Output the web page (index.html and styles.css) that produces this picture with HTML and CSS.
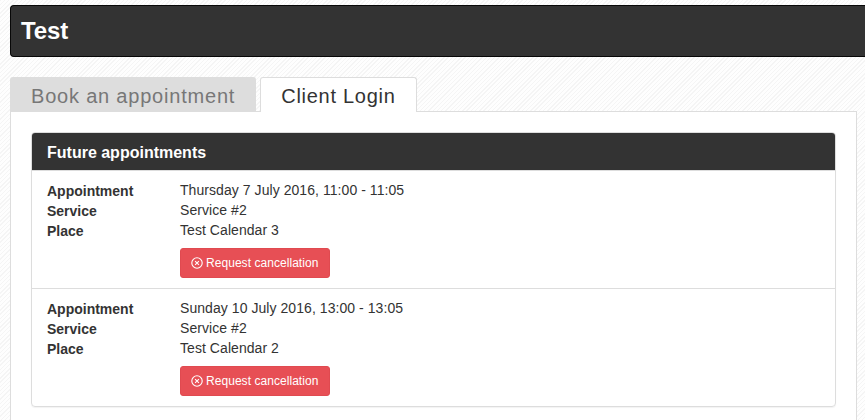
FILE: index.html
```html
<!DOCTYPE html>
<html lang="en">
<head>
    <meta charset="UTF-8">
    <meta name="viewport" content="width=device-width, initial-scale=1.0">
    <title>Test</title>
    <link rel="stylesheet" href="styles.css">
</head>
<body>
    <div class="navbar">
        <div class="brand">Test</div>
    </div>

    <div class="tabs">
        <div class="tab">Book an appointment</div>
        <div class="tab active">Client Login</div>
    </div>

    <div class="tab-content">
        <div class="panel">
            <div class="panel-heading">Future appointments</div>

            <div class="appointment">
                <dl class="details">
                    <dt>Appointment</dt>
                    <dd>Thursday 7 July 2016, 11:00 - 11:05</dd>
                    <dt>Service</dt>
                    <dd>Service #2</dd>
                    <dt>Place</dt>
                    <dd>Test Calendar 3</dd>
                </dl>
                <button class="btn-cancel">
                    <svg class="icon" viewBox="0 0 12 12"><circle cx="6" cy="6" r="5.2"/><path d="M4.1 4.1l3.8 3.8M7.9 4.1l-3.8 3.8"/></svg>
                    Request cancellation
                </button>
            </div>

            <div class="appointment">
                <dl class="details">
                    <dt>Appointment</dt>
                    <dd>Sunday 10 July 2016, 13:00 - 13:05</dd>
                    <dt>Service</dt>
                    <dd>Service #2</dd>
                    <dt>Place</dt>
                    <dd>Test Calendar 2</dd>
                </dl>
                <button class="btn-cancel">
                    <svg class="icon" viewBox="0 0 12 12"><circle cx="6" cy="6" r="5.2"/><path d="M4.1 4.1l3.8 3.8M7.9 4.1l-3.8 3.8"/></svg>
                    Request cancellation
                </button>
            </div>
        </div>
    </div>
</body>
</html>
```

FILE: styles.css
```css
html, body {
    height: 420px;
    overflow: hidden;
}
body {
    margin: 0;
    padding: 5px 0 0 10px;
    box-sizing: border-box;
    font-family: "Liberation Sans", Arial, sans-serif;
    font-size: 14px;
    line-height: 20px;
    color: #333;
    background: repeating-linear-gradient(135deg, #f5f5f5 0, #f5f5f5 1px, #fefefe 1px, #fefefe 3px);
}
.navbar {
    height: 50px;
    background: #333;
    border: 1px solid #080808;
    border-right: none;
    border-radius: 4px 0 0 4px;
    padding-left: 10px;
    display: flex;
    align-items: center;
}
.brand {
    color: white;
    font-size: 24px;
    font-weight: bold;
    letter-spacing: -0.1px;
}
.tabs {
    display: flex;
    gap: 4px;
    margin-top: 20px;
}
.tab {
    height: 33px;
    padding: 0 20px;
    font-size: 20px;
    line-height: 37px;
    letter-spacing: 0.8px;
    color: #777;
    background: #ddd;
    border: 1px solid #ddd;
    border-bottom: none;
    border-radius: 3px 3px 0 0;
}
.tab.active {
    color: #333;
    background: white;
    margin-bottom: -1px;
    height: 34px;
    letter-spacing: 0.72px;
    position: relative;
}
.tab-content {
    width: 847px;
    box-sizing: border-box;
    background: white;
    border: 1px solid #ddd;
    border-bottom: none;
    padding: 20px 20px 0;
    height: 320px;
}
.panel {
    border: 1px solid #ddd;
    border-radius: 4px;
    box-shadow: 0 1px 1px rgba(0, 0, 0, .05);
}
.panel-heading {
    height: 37px;
    padding-left: 15px;
    line-height: 40px;
    font-size: 16px;
    font-weight: bold;
    color: white;
    background: #333;
    border-radius: 3px 3px 0 0;
}
.appointment {
    padding: 9px 15px 10px;
    border-top: 1px solid #ddd;
}
.appointment:first-of-type {
    border-top: none;
}
.details {
    display: grid;
    grid-template-columns: 133px 1fr;
    margin: 0;
}
dt {
    font-weight: bold;
    padding-top: 1px;
    height: 19px;
}
dd {
    margin: 0;
    letter-spacing: 0.06px;
}
.btn-cancel {
    display: flex;
    align-items: center;
    gap: 3px;
    margin: 8px 0 0 133px;
    width: 150px;
    height: 30px;
    padding: 0 10px 1px;
    background: #e74f55;
    color: white;
    border: 1px solid #e04a50;
    border-radius: 3px;
    font-family: inherit;
    font-size: 12px;
    letter-spacing: 0.05px;
    white-space: nowrap;
}
.icon {
    width: 12px;
    height: 12px;
    fill: none;
    stroke: white;
    stroke-width: 1.1;
    flex: none;
}
```
